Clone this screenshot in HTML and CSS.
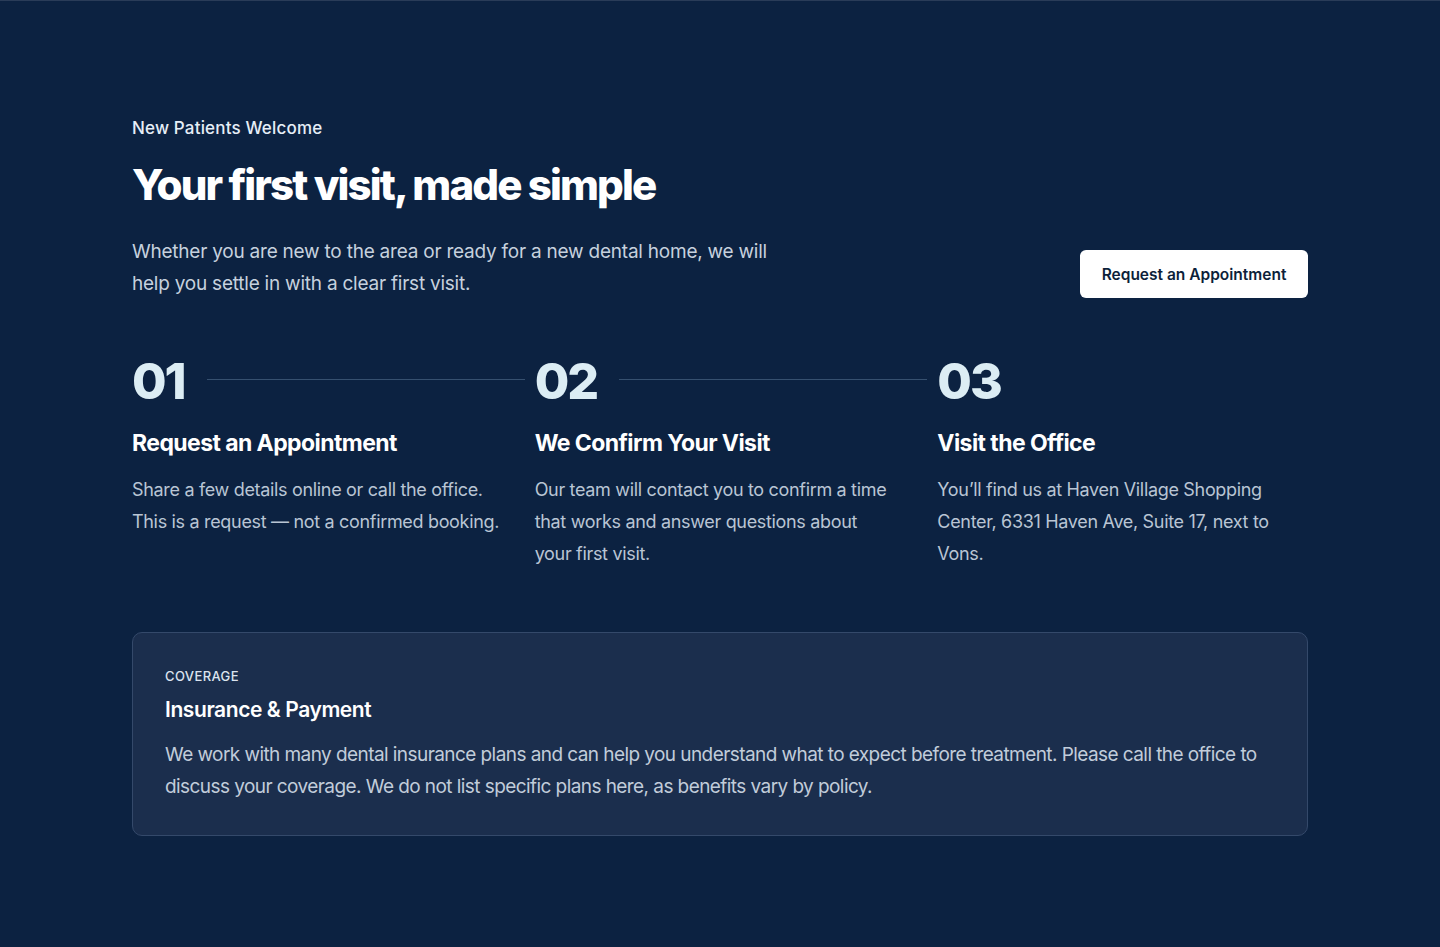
FILE: index.html
```html
<!DOCTYPE html>
<html lang="en">
<head>
  <meta charset="UTF-8" />
  <meta name="viewport" content="width=device-width, initial-scale=1.0" />
  <title>Your first visit, made simple</title>
  <link rel="stylesheet" href="styles.css">
</head>
<body>
  <section class="visit">
    <div class="wrap">
      <div class="intro">
        <div class="intro-text">
          <p class="eyebrow">New Patients Welcome</p>
          <h1>Your first visit, made simple</h1>
          <p class="lead">Whether you are new to the area or ready for a new dental home, we will help you settle in with a clear first visit.</p>
        </div>
        <a class="btn" href="#">Request an Appointment</a>
      </div>

      <ol class="steps">
        <li class="step">
          <div class="step-head">
            <span class="num">01</span>
            <span class="rule"></span>
          </div>
          <h3>Request an Appointment</h3>
          <p>Share a few details online or call the office. This is a request — not a confirmed booking.</p>
        </li>
        <li class="step">
          <div class="step-head">
            <span class="num">02</span>
            <span class="rule"></span>
          </div>
          <h3>We Confirm Your Visit</h3>
          <p>Our team will contact you to confirm a time that works and answer questions about your&nbsp;first visit.</p>
        </li>
        <li class="step">
          <div class="step-head">
            <span class="num">03</span>
          </div>
          <h3>Visit the Office</h3>
          <p>You’ll find us at Haven Village Shopping Center, 6331 Haven Ave, Suite 17, next to Vons.</p>
        </li>
      </ol>

      <div class="card">
        <p class="card-label">Coverage</p>
        <h2>Insurance &amp; Payment</h2>
        <p>We work with many dental insurance plans and can help you understand what to expect before treatment. Please call the office to discuss your coverage. We do not list specific plans here, as benefits vary by policy.</p>
      </div>
    </div>
  </section>
</body>
</html>
```

FILE: styles.css
```css
* { box-sizing: border-box; }
html, body {
  margin: 0;
  padding: 0;
  background: #0c2241;
  font-family: Inter, "Noto Sans", sans-serif;
  color: #fff;
}
.visit {
  min-height: 947px;
  padding: 116px 0 80px;
  border-top: 1px solid #2a3c58;
}
.wrap {
  width: 1176px;
  margin: 0 auto;
}
.intro {
  display: flex;
  justify-content: space-between;
  align-items: flex-start;
}
.eyebrow {
  margin: 0;
  font-size: 17px;
  font-weight: 500;
  line-height: 22px;
  letter-spacing: 0.01em;
  color: #e6eef7;
}
h1 {
  margin: 20px 0 0;
  font-size: 42px;
  line-height: 52px;
  font-weight: 800;
  letter-spacing: -0.045em;
  color: #fff;
}
.lead {
  margin: 25px 0 0;
  width: 645px;
  font-size: 19px;
  line-height: 32px;
  letter-spacing: -0.012em;
  color: #c6d1de;
}
.btn {
  margin-top: 133px;
  display: inline-flex;
  align-items: center;
  justify-content: center;
  width: 228px;
  height: 48px;
  background: #fff;
  color: #0d1f3a;
  border-radius: 6px;
  font-size: 15.5px;
  font-weight: 600;
  letter-spacing: 0;
  text-decoration: none;
}
.steps {
  list-style: none;
  margin: 51px 0 0;
  padding: 0;
  display: grid;
  grid-template-columns: repeat(3, 1fr);
  gap: 32px;
}
.step-head {
  display: flex;
  align-items: center;
  gap: 22px;
}
.num {
  font-size: 50px;
  line-height: 60px;
  font-weight: 800;
  letter-spacing: -0.04em;
  color: #dcedf4;
}
.rule {
  flex: 1;
  height: 1px;
  background: #36506f;
  margin-right: -22px;
  position: relative;
  top: -2px;
}
.step h3 {
  margin: 17px 0 0;
  font-size: 23px;
  line-height: 30px;
  font-weight: 700;
  letter-spacing: -0.025em;
  color: #fff;
}
.step p {
  margin: 16px 0 0;
  font-size: 18px;
  line-height: 32px;
  letter-spacing: -0.018em;
  color: #b9c5d4;
}
.card {
  margin-top: 62px;
  background: #1b2e4d;
  border: 1px solid #34496a;
  border-radius: 10px;
  padding: 34px 32px 32px;
}
.card-label {
  margin: 0;
  font-size: 13px;
  line-height: 18px;
  font-weight: 500;
  text-transform: uppercase;
  letter-spacing: 0.03em;
  color: #dbe4ef;
}
.card h2 {
  margin: 11px 0 0;
  font-size: 21px;
  line-height: 28px;
  font-weight: 600;
  letter-spacing: -0.02em;
  color: #fff;
}
.card p:last-child {
  margin: 15px 0 0;
  font-size: 19px;
  line-height: 32px;
  letter-spacing: -0.03em;
  color: #c1ccda;
}
```
